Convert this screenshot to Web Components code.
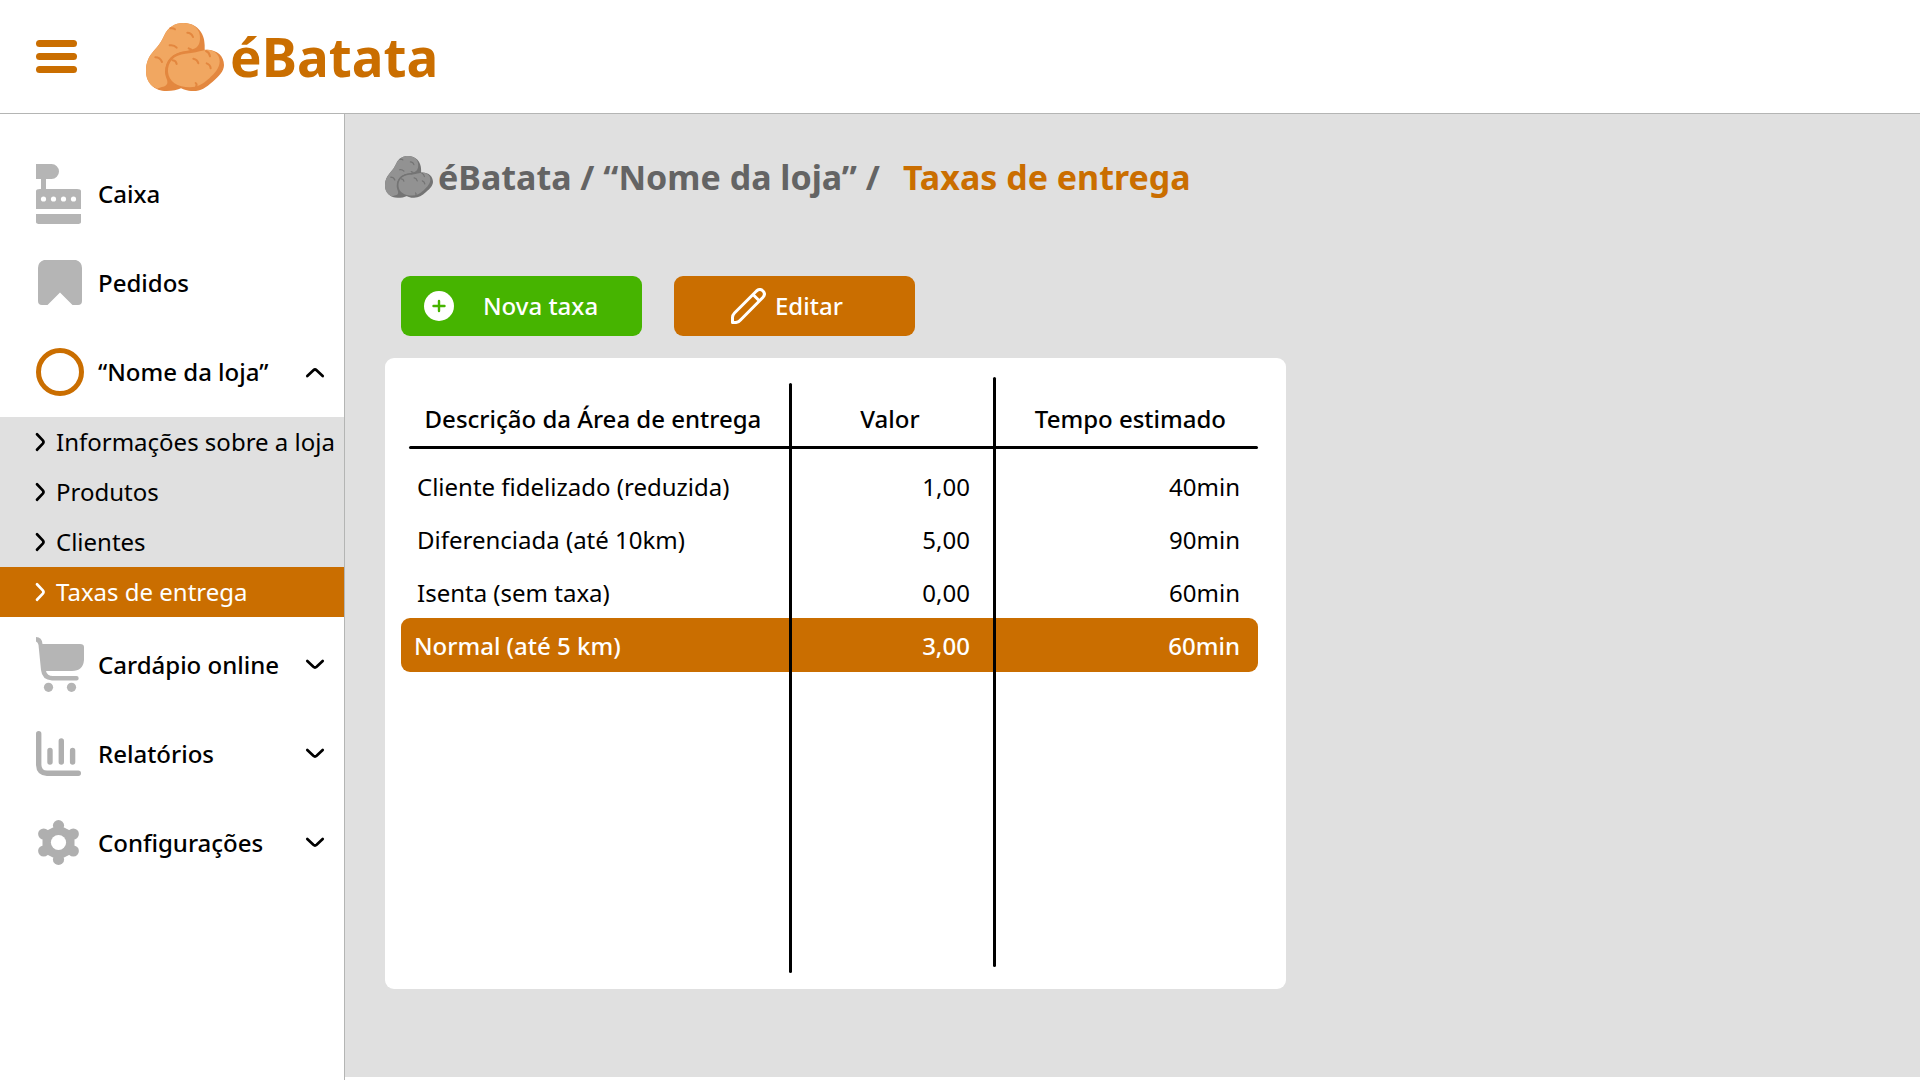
<!DOCTYPE html>
<html lang="pt-BR">
<head>
<meta charset="utf-8">
<title>éBatata – Taxas de entrega</title>
<style>
  :root {
    --brand: #ca6e00;
    --surface: #e0e0e0;
    --line: #b4b5b4;
    --icon: #b5b5b5;
  }
  body { margin: 0; background: #fff; color: #000; font: 24px/32px "Noto Sans", "Open Sans", sans-serif; }
</style>
</head>
<body>
<eb-app></eb-app>

<template id="t-potato">
  <style>
    :host { display: block; }
    svg { display: block; width: 100%; height: auto; }
    .d { fill: var(--potato-dark, #e3873f); }
    .l { fill: var(--potato-light, #f1a761); }
    .m { fill: none; stroke: var(--potato-dark, #e3873f); stroke-width: 6; stroke-linecap: round; }
  </style>
  <svg viewBox="438 69 234 204" aria-hidden="true">
    <path class="d" d="M550 69C588 69 614 96 614 136V158L560 240 545 264C532 270 518 273 500 273 464 273 438 249 438 212 438 188 446 170 461 153 476 137 483 127 493 106 504 82 524 69 550 69Z"/>
    <path class="l" d="M550 69C580 69 602 86 600 118 598 142 586 148 562 152 520 156 495 180 495 216 495 230 504 240 502 250 498 262 484 260 472 266 450 258 438 240 438 212 438 188 446 170 461 153 476 137 483 127 493 106 504 82 524 69 550 69Z"/>
    <path class="d" d="M497 218C494 180 518 158 552 155 585 152 598 149 620 149 652 149 672 168 672 195 672 214 656 230 638 245 618 263 602 273 580 273 560 273 548 267 536 260 512 250 498 238 497 218Z"/>
    <path class="l" d="M504 216C502 186 522 164 556 161 590 158 606 150 622 149 644 150 659 164 659 184 659 204 644 220 628 235 608 253 592 262 570 262 532 262 506 244 504 216Z"/>
    <path class="m" d="M511 85Q519 83 525 88M562 98Q574 98 579 111M509 136Q522 134 530 143M566 145L574 149M466 172Q480 172 486 186M518 181Q528 182 530 192M580 176Q592 178 595 190M620 190Q631 194 632 205M618 153Q628 157 630 169M587 249Q592 252 588 261"/>
  </svg>
</template>

<template id="t-chevron">
  <style>
    :host { display: block; width: 18px; height: 18px; flex: none; }
    svg { display: block; width: 100%; height: 100%; overflow: visible; }
    :host([to="up"]) svg { transform: rotate(180deg); }
    :host([to="right"]) svg { transform: rotate(-90deg); }
  </style>
  <svg viewBox="0 0 18 18" fill="none" stroke="currentColor" stroke-width="2.7" stroke-linecap="round" aria-hidden="true"><path d="M1.300 5L7.400 10.800Q9 12.200 10.600 10.800L16.700 5"/></svg>
</template>

<template id="t-header">
  <style>
    :host { display: flex; align-items: center; gap: 69px; height: 113px; padding: 0 36px; border-bottom: 1px solid var(--line); }
    button { display: grid; gap: 6px; width: 41px; padding: 0; border: 0; background: none; cursor: pointer; }
    button span { height: 7px; border-radius: 4px; background: var(--brand); }
    a { display: flex; align-items: center; gap: 6px; color: var(--brand); text-decoration: none; font-size: 53px; line-height: 72px; font-weight: 700; }
    eb-potato { width: 78px; }
  </style>
  <button aria-label="Menu"><span></span><span></span><span></span></button>
  <a href="#inicio"><eb-potato></eb-potato>éBatata</a>
</template>

<template id="t-item">
  <style>
    :host { display: block; }
    a, button { box-sizing: border-box; display: flex; align-items: center; gap: 14px; width: 100%; height: 89px; padding: 0 20px 0 36px; border: 0; background: none; color: inherit; font: inherit; font-weight: 500; text-align: left; text-decoration: none; white-space: nowrap; cursor: pointer; }
    .icon { display: flex; width: 48px; flex: none; }
    .label { flex: 1; }
  </style>
</template>

<template id="t-sub">
  <style>
    :host { display: block; background: var(--surface); }
    :host([current]) { background: var(--brand); color: #fff; }
    a { display: flex; align-items: center; gap: 6px; height: 50px; padding-left: 32px; color: inherit; text-decoration: none; white-space: nowrap; }
  </style>
  <a href="#"><eb-chevron to="right"></eb-chevron><slot></slot></a>
</template>

<template id="t-sidebar">
  <style>
    :host { display: block; box-sizing: border-box; width: 345px; flex: none; padding-top: 35px; border-right: 1px solid var(--line); }
    svg { display: block; fill: var(--icon); }
    .group { margin: 1px 0 3px; }
  </style>
  <nav>
    <eb-item>
      <svg slot="icon" width="45" height="60" viewBox="0 0 45 60"><path d="M0 0H15.5a7.5 7.5 0 0 1 0 15H10V25H41Q45 25 45 27V45H0V27Q0 25 4 25H5V15H0ZM0 50H45V58Q45 60 41 60H4Q0 60 0 58Z"/><g fill="#fff"><circle cx="7.5" cy="35" r="2.6"/><circle cx="17.5" cy="35" r="2.6"/><circle cx="27.5" cy="35" r="2.6"/><circle cx="37.5" cy="35" r="2.6"/></g></svg>Caixa</eb-item>
    <eb-item>
      <svg slot="icon" width="48" height="45" viewBox="0 0 48 45"><path d="M8 0H40Q46 2 46 8V41Q46 45 42 45H36.5L24 32.5 11.5 45H6Q2 45 2 41V8Q2 2 8 0Z"/></svg>Pedidos</eb-item>
    <eb-item expandable open>
      <svg slot="icon" width="48" height="48" viewBox="0 0 48 48"><circle cx="24" cy="24" r="21.5" fill="none" stroke="#ca6e00" stroke-width="5"/></svg>“Nome da loja”</eb-item>
    <div class="group">
      <eb-sub>Informações sobre a loja</eb-sub>
      <eb-sub>Produtos</eb-sub>
      <eb-sub>Clientes</eb-sub>
      <eb-sub current>Taxas de entrega</eb-sub>
    </div>
    <eb-item expandable>
      <svg slot="icon" width="48" height="55" viewBox="0 0 48 55"><path d="M0 0Q6 0 6.5 7H44Q48 7 48 10V23Q47 34 36 34H10Q11 39 17 39H40.5a2.2 2.2 0 0 1 0 4.4H16Q6 43 5 33L2.5 8Q2 5 0 4.5Z"/><circle cx="12.5" cy="50.3" r="4.6"/><circle cx="35.5" cy="50.3" r="4.6"/></svg>Cardápio online</eb-item>
    <eb-item expandable>
      <svg slot="icon" width="45" height="45" viewBox="0 0 45 45" style="fill:none;stroke:#afafaf;stroke-linecap:round"><path stroke-width="5.4" d="M2.7 2.7V34Q3 42 11 42.3H42.3M14 19.5V31M25.3 10V31M36.6 19.5V31"/></svg>Relatórios</eb-item>
    <eb-item expandable>
      <svg slot="icon" width="45" height="45" viewBox="0 0 45 45" style="fill:#afafaf"><g><circle cx="22.5" cy="5.6" r="5.6"/><circle cx="22.5" cy="39.4" r="5.6"/><circle cx="7.7" cy="14" r="5.6"/><circle cx="37.3" cy="14" r="5.6"/><circle cx="7.7" cy="31" r="5.6"/><circle cx="37.3" cy="31" r="5.6"/><path d="M17 7.5L11 10.5 6.5 19.5V25.5L11 34.5 17 37.5H28L34 34.5 38.5 25.5V19.5L34 10.5 28 7.5Z"/></g><circle cx="22.5" cy="22.5" r="7.6" fill="#fff"/></svg>Configurações</eb-item>
  </nav>
</template>

<template id="t-crumbs">
  <style>
    :host { display: block; }
    nav { display: flex; align-items: center; gap: 5px; color: #646464; font-size: 34px; line-height: 48px; font-weight: 700; white-space: nowrap; }
    a { color: inherit; text-decoration: none; }
    h1 { margin: 0 0 0 18px; font: inherit; color: var(--brand); }
    eb-potato { width: 48px; --potato-light: #929292; --potato-dark: #747474; }
  </style>
  <nav aria-label="Caminho">
    <eb-potato></eb-potato>
    <span><a href="#inicio">éBatata</a> / <a href="#loja">“Nome da loja”</a> /</span>
    <h1>Taxas de entrega</h1>
  </nav>
</template>

<template id="t-action">
  <style>
    :host { display: block; width: 241px; }
    button { display: flex; align-items: center; width: 100%; height: 60px; padding: 0 0 0 var(--pad); gap: var(--gap); border: 0; border-radius: 9px; background: var(--fill); color: #fff; font: inherit; font-weight: 500; cursor: pointer; }
  </style>
  <button type="button"><slot name="icon"></slot><slot></slot></button>
</template>

<template id="t-fees">
  <style>
    :host { display: block; box-sizing: border-box; width: min(100%, 901px); min-height: 631px; padding: 0 28px 0 16px; border-radius: 9px; background: #fff; }
    table { width: 100%; table-layout: fixed; border-collapse: separate; border-spacing: 0; }
    th, td { box-sizing: border-box; white-space: nowrap; }
    td { height: 53px; padding: 2px 25px 0 16px; text-align: right; }
    td:first-child { text-align: left; }
    td:last-child { padding-right: 18px; }
    thead { position: relative; }
    th { position: relative; height: 101px; padding: 45px 6px 0 0; vertical-align: top; text-align: center; font-weight: 500; }
    th:last-child { padding: 45px 0 0 8px; }
    thead::after { content: ""; position: absolute; left: 8px; right: 0; top: 88px; height: 3px; border-radius: 2px; background: #000; }
    th:not(:last-child)::after { content: ""; position: absolute; z-index: 1; right: -1px; top: 25px; width: 3px; height: 590px; border-radius: 2px; background: #000; }
    th:nth-child(2)::after { top: 19px; }
    tr.selected td { height: 54px; background: var(--brand); color: #fff; font-weight: 500; }
    tr.selected td:first-child { border-radius: 9px 0 0 9px; padding-left: 13px; }
    tr.selected td:last-child { border-radius: 0 9px 9px 0; }
  </style>
  <table>
    <colgroup><col style="width:45.5%"><col style="width:23.8%"><col></colgroup>
    <thead><tr><th scope="col">Descrição da Área de entrega</th><th scope="col">Valor</th><th scope="col">Tempo estimado</th></tr></thead>
    <tbody></tbody>
  </table>
</template>

<template id="t-app">
  <style>
    :host { display: flex; flex-direction: column; min-height: 100vh; }
    .body { display: flex; flex: 1; }
    main { flex: 1; min-width: 0; margin-bottom: 3px; padding: 39px 40px 88px; background: var(--surface); }
    .actions { display: flex; gap: 32px; margin: 75px 0 22px; padding-left: 16px; }
    .new { --fill: #46b400; --pad: 23px; --gap: 29px; }
    .edit { --fill: var(--brand); --pad: 57px; --gap: 9px; }
  </style>
  <eb-header></eb-header>
  <div class="body">
    <eb-sidebar></eb-sidebar>
    <main>
      <eb-crumbs></eb-crumbs>
      <div class="actions">
        <eb-action class="new"><svg slot="icon" width="30" height="30" viewBox="0 0 30 30"><circle cx="15" cy="15" r="15" fill="#fff"/><path d="M15 10V20M9.5 15H20.5" stroke="#46b400" stroke-width="2.4" stroke-linecap="round"/></svg>Nova taxa</eb-action>
        <eb-action class="edit"><svg slot="icon" width="35" height="36" viewBox="0 0 35 36" fill="none" stroke="#fff" stroke-width="3" stroke-linejoin="round"><path d="M1.5 34.5V29.5Q1.5 27 3.5 25L25.5 3Q29 0 32 3 35 6 31.8 9.5L10 31.5Q8 34 5 34.5ZM22 6.5L28.5 13"/></svg>Editar</eb-action>
      </div>
      <eb-fees></eb-fees>
    </main>
  </div>
</template>

<script>
  class Base extends HTMLElement {
    constructor() {
      super();
      const root = this.attachShadow({ mode: "open" });
      root.append(document.getElementById(this.constructor.template).content.cloneNode(true));
    }
  }
  const define = (name, template) =>
    customElements.define(name, class extends Base { static template = template; });

  define("eb-potato", "t-potato");
  define("eb-chevron", "t-chevron");
  define("eb-header", "t-header");

  // Menu entry: a link, or a disclosure button when it has children.
  customElements.define("eb-item", class extends Base {
    static template = "t-item";
    connectedCallback() {
      if (this.shadowRoot.querySelector(".label")) return;
      const expandable = this.hasAttribute("expandable");
      const open = this.hasAttribute("open");
      const el = document.createElement(expandable ? "button" : "a");
      if (expandable) el.setAttribute("aria-expanded", open);
      else el.href = "#";
      el.innerHTML = '<span class="icon"><slot name="icon"></slot></span><span class="label"><slot></slot></span>' +
        (expandable ? `<eb-chevron to="${open ? "up" : "down"}"></eb-chevron>` : "");
      this.shadowRoot.append(el);
    }
  });

  define("eb-sub", "t-sub");
  define("eb-sidebar", "t-sidebar");
  define("eb-crumbs", "t-crumbs");
  define("eb-action", "t-action");

  customElements.define("eb-fees", class extends Base {
    static template = "t-fees";
    connectedCallback() {
      const rows = [
        ["Cliente fidelizado (reduzida)", "1,00", "40min"],
        ["Diferenciada (até 10km)", "5,00", "90min"],
        ["Isenta (sem taxa)", "0,00", "60min"],
        ["Normal (até 5 km)", "3,00", "60min"],
      ];
      const body = this.shadowRoot.querySelector("tbody");
      body.replaceChildren(...rows.map((cells, i) => {
        const tr = document.createElement("tr");
        if (i === 3) tr.className = "selected";
        for (const text of cells) tr.insertCell().textContent = text;
        return tr;
      }));
    }
  });

  define("eb-app", "t-app");
</script>
</body>
</html>
